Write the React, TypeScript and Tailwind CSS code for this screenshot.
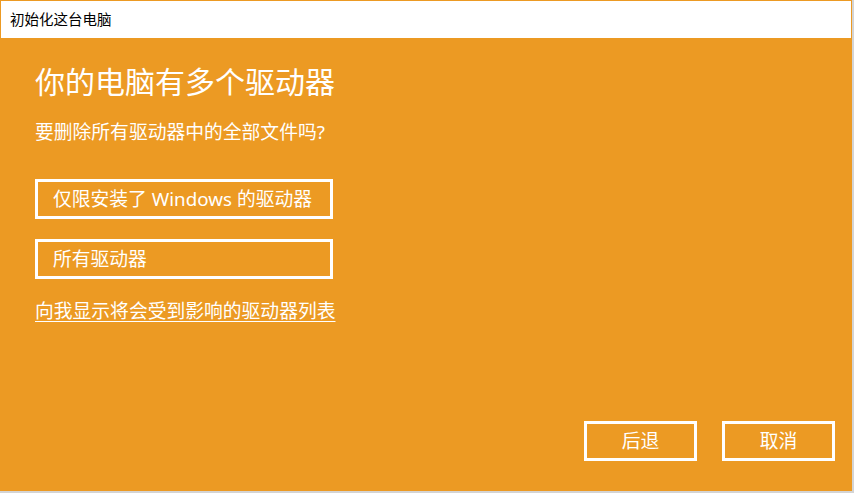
const font = { fontFamily: '"Noto Sans", "Noto Sans CJK SC", sans-serif' };

function OutlineButton({ children, className }: { children: React.ReactNode; className?: string }) {
  return (
    <button
      className={`h-[40px] border-[3px] border-white text-white text-[18.8px] leading-none flex items-center ${className ?? ''}`}
    >
      {children}
    </button>
  );
}

export default function App() {
  return (
    <div className="w-[854px] h-[493px] bg-[#d4d4d4]" style={font}>
      <div className="w-[852px] h-[491px] border border-[#ec9a23] flex flex-col bg-[#ec9a23]">
        <div className="h-[37px] bg-white flex items-center pl-[9px] text-[14.5px] text-black">
          初始化这台电脑
        </div>
        <div className="flex-1 flex flex-col px-[34px] text-white">
          <h1 className="mt-[24px] text-[30px] leading-[40px] font-normal">你的电脑有多个驱动器</h1>
          <p className="mt-[17px] text-[18.8px] leading-[26px]">要删除所有驱动器中的全部文件吗?</p>
          <OutlineButton className="mt-[34px] w-[298px] pl-[15px]">仅限安装了 Windows 的驱动器</OutlineButton>
          <OutlineButton className="mt-[20px] w-[298px] pl-[15px]">所有驱动器</OutlineButton>
          <a className="mt-[19px] text-[18.8px] leading-[26px] underline underline-offset-[3px] decoration-1 self-start cursor-pointer">
            向我显示将会受到影响的驱动器列表
          </a>
          <div className="mt-auto mb-[29px] flex justify-end gap-[25px] -mr-[18px]">
            <OutlineButton className="w-[113px] justify-center">后退</OutlineButton>
            <OutlineButton className="w-[113px] justify-center">取消</OutlineButton>
          </div>
        </div>
      </div>
    </div>
  );
}
